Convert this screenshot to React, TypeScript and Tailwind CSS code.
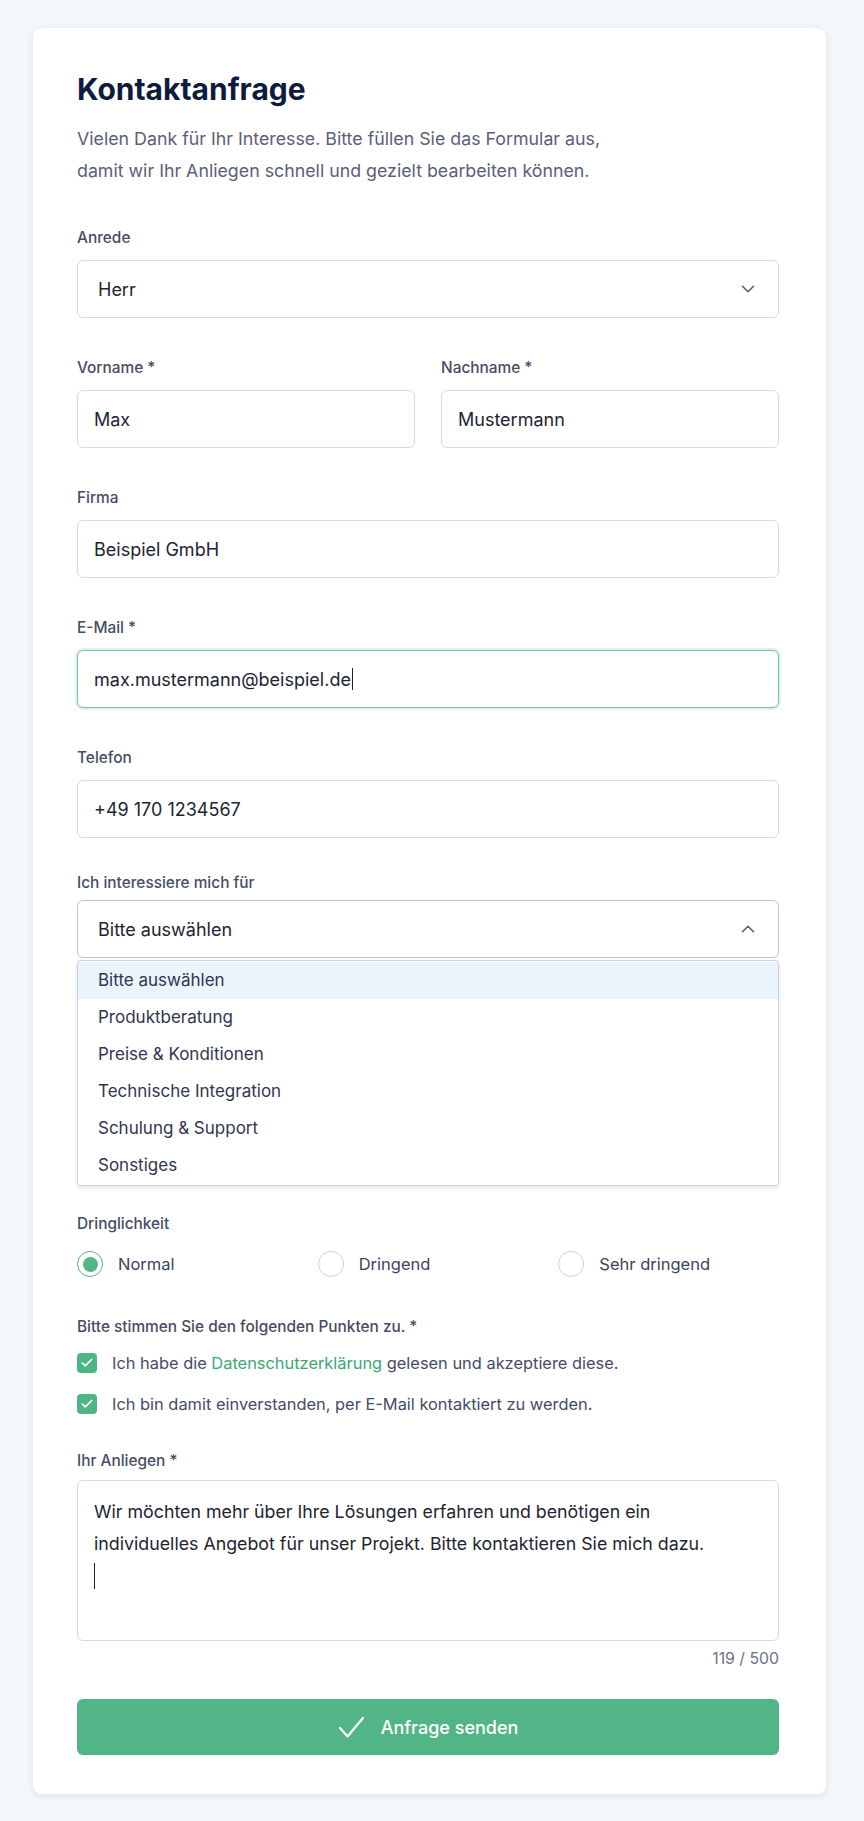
import React from 'react';
import { Check, ChevronDown, ChevronUp } from 'lucide-react';

const Label = ({ children, className = '' }: { children: React.ReactNode; className?: string }) => (
  <div className={`text-[15.4px] leading-5 font-medium text-[#464d63] ${className}`}>{children}</div>
);

const Field = ({ value, caret = false, focused = false }: { value: string; caret?: boolean; focused?: boolean }) => (
  <div
    className={
      focused
        ? 'h-[58px] rounded-md border border-[#74c697] bg-white px-4 flex items-center text-[18px] text-[#1e2433] shadow-[0_0_0_2px_rgba(82,181,135,0.18)]'
        : 'h-[58px] rounded-md border border-[#d6dae1] bg-white px-4 flex items-center text-[18px] text-[#1e2433]'
    }
  >
    <span>{value}</span>
    {caret && <span className="ml-px inline-block w-px h-[22px] bg-[#1e2433]" />}
  </div>
);

const Radio = ({ label, checked = false }: { label: string; checked?: boolean }) => (
  <div className="flex items-center gap-[15px]">
    {checked ? (
      <span className="w-[26px] h-[26px] rounded-full border-[1.5px] border-[#52b587] bg-white flex items-center justify-center">
        <span className="w-[15px] h-[15px] rounded-full bg-[#52b587]" />
      </span>
    ) : (
      <span className="w-[26px] h-[26px] rounded-full border border-[#cdd1d8] bg-white" />
    )}
    <span className="text-[16.5px] text-[#3d4460]">{label}</span>
  </div>
);

const CheckRow = ({ children }: { children: React.ReactNode }) => (
  <div className="flex items-center gap-[15px] h-6">
    <span className="w-5 h-5 rounded-[4px] bg-[#4fb584] flex items-center justify-center">
      <Check size={14} strokeWidth={3} className="text-white" />
    </span>
    <span className="text-[16.4px] text-[#454c66]">{children}</span>
  </div>
);

const options = ['Bitte auswählen', 'Produktberatung', 'Preise & Konditionen', 'Technische Integration', 'Schulung & Support', 'Sonstiges'];

export default function App() {
  return (
    <div className="min-h-screen bg-[#f3f6fa] pt-[27px] pb-7 pl-8 font-['Inter',sans-serif]">
      <div className="w-[795px] rounded-[10px] border border-[#eceff3] bg-white pt-[43px] pb-[39px] pl-[44px] pr-[47px] shadow-[0_2px_6px_rgba(15,23,42,0.07)]">
        <h1 className="text-[30px] leading-9 font-bold text-[#0f1b3d]">Kontaktanfrage</h1>
        <p className="mt-4 text-[17.8px] leading-8 text-[#5a6078]">
          Vielen Dank für Ihr Interesse. Bitte füllen Sie das Formular aus,
          <br />
          damit wir Ihr Anliegen schnell und gezielt bearbeiten können.
        </p>

        <div className="mt-[41px]">
          <Label className="mb-3">Anrede</Label>
          <div className="h-[58px] rounded-md border border-[#d6dae1] bg-white pl-5 pr-[19px] flex items-center justify-between text-[18px] text-[#1e2433]">
            <span>Herr</span>
            <ChevronDown size={22} strokeWidth={1.75} className="text-[#5a6078]" />
          </div>
        </div>

        <div className="mt-10 grid grid-cols-2 gap-[26px]">
          <div>
            <Label className="mb-3">Vorname *</Label>
            <Field value="Max" />
          </div>
          <div>
            <Label className="mb-3">Nachname *</Label>
            <Field value="Mustermann" />
          </div>
        </div>

        <div className="mt-10">
          <Label className="mb-3">Firma</Label>
          <Field value="Beispiel GmbH" />
        </div>

        <div className="mt-10">
          <Label className="mb-3">E-Mail *</Label>
          <Field value="max.mustermann@beispiel.de" caret focused />
        </div>

        <div className="mt-10">
          <Label className="mb-3">Telefon</Label>
          <Field value="+49 170 1234567" />
        </div>

        <div className="mt-[35px]">
          <Label className="mb-[7px]">Ich interessiere mich für</Label>
          <div className="h-[58px] rounded-md border border-[#bfc4cf] bg-white pl-5 pr-[19px] flex items-center justify-between text-[18px] text-[#1e2433]">
            <span>Bitte auswählen</span>
            <ChevronUp size={22} strokeWidth={1.75} className="text-[#5a6078]" />
          </div>
          <div className="mt-[2px] rounded-[4px] border border-[#cdd2db] bg-white py-px shadow-[0_2px_5px_rgba(15,23,42,0.12)]">
            {options.map((o, i) => (
              <div
                key={o}
                className={
                  i === 0
                    ? 'h-[37px] px-5 flex items-center text-[17px] text-[#2f3650] bg-[#e9f4fd]'
                    : 'h-[37px] px-5 flex items-center text-[17px] text-[#2f3650]'
                }
              >
                {o}
              </div>
            ))}
          </div>
        </div>

        <div className="mt-7">
          <Label>Dringlichkeit</Label>
          <div className="mt-[17px] grid grid-cols-3 gap-x-5">
            <Radio label="Normal" checked />
            <Radio label="Dringend" />
            <Radio label="Sehr dringend" />
          </div>
        </div>

        <div className="mt-10">
          <Label>Bitte stimmen Sie den folgenden Punkten zu. *</Label>
          <div className="mt-[14px] flex flex-col gap-[17px]">
            <CheckRow>
              Ich habe die <span className="text-[#3aa872]">Datenschutzerklärung</span> gelesen und akzeptiere diese.
            </CheckRow>
            <CheckRow>Ich bin damit einverstanden, per E-Mail kontaktiert zu werden.</CheckRow>
          </div>
        </div>

        <div className="mt-[35px]">
          <Label className="mb-[9px]">Ihr Anliegen *</Label>
          <div className="h-[161px] rounded-md border border-[#d6dae1] bg-white px-4 py-[15px] text-[17.8px] leading-8 text-[#1e2433]">
            Wir möchten mehr über Ihre Lösungen erfahren und benötigen ein
            <br />
            individuelles Angebot für unser Projekt. Bitte kontaktieren Sie mich dazu.
            <div className="h-8 flex items-center">
              <span className="inline-block w-px h-[26px] bg-[#1e2433]" />
            </div>
          </div>
          <div className="mt-2 text-right text-[15.8px] leading-5 text-[#6b7186]">119 / 500</div>
        </div>

        <button className="mt-[30px] w-full h-14 rounded-md bg-[#52b587] flex items-center justify-center gap-4 text-white text-[18px] font-medium">
          <svg width="27" height="23" viewBox="0 0 27 23" fill="none" stroke="currentColor" strokeWidth="2.2" strokeLinecap="round" strokeLinejoin="round">
            <polyline points="2,12 9.5,20.5 25,2" />
          </svg>
          <span>Anfrage senden</span>
        </button>
      </div>
    </div>
  );
}
